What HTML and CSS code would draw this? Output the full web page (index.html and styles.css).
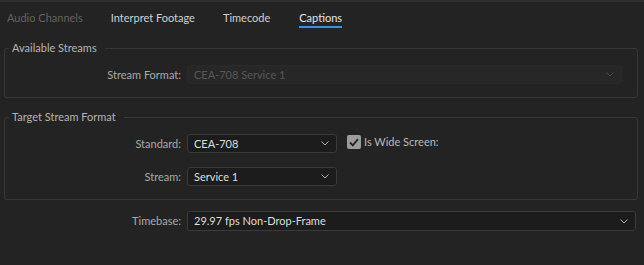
FILE: index.html
```html
<!DOCTYPE html>
<html lang="en">
<head>
    <meta charset="UTF-8">
    <title>Captions</title>
    <link rel="stylesheet" href="styles.css">
</head>
<body>

<div class="tabs">
    <span class="tab disabled">Audio Channels</span>
    <span class="tab">Interpret Footage</span>
    <span class="tab">Timecode</span>
    <span class="tab active">Captions</span>
</div>

<fieldset class="group first">
    <legend>Available Streams</legend>
    <div class="row">
        <label class="field-label">Stream Format:</label>
        <div class="dropdown wide-1 off">
            <span>CEA-708 Service 1</span>
            <svg class="chev" width="8" height="5" viewBox="0 0 8 5"><path d="M0.5 0.5 L4 4 L7.5 0.5" fill="none" stroke="currentColor" stroke-width="1"/></svg>
        </div>
    </div>
</fieldset>

<fieldset class="group second">
    <legend>Target Stream Format</legend>
    <div class="row">
        <label class="field-label">Standard:</label>
        <div class="dropdown short">
            <span>CEA-708</span>
            <svg class="chev" width="8" height="5" viewBox="0 0 8 5"><path d="M0.5 0.5 L4 4 L7.5 0.5" fill="none" stroke="currentColor" stroke-width="1"/></svg>
        </div>
        <div class="check">
            <span class="box">
                <svg width="10" height="9" viewBox="0 0 10 9"><path d="M1 4.5 L3.8 7.3 L9 1.2" fill="none" stroke="#262626" stroke-width="1.8"/></svg>
            </span>
            <span>Is Wide Screen:</span>
        </div>
    </div>
    <div class="row">
        <label class="field-label">Stream:</label>
        <div class="dropdown short">
            <span>Service 1</span>
            <svg class="chev" width="8" height="5" viewBox="0 0 8 5"><path d="M0.5 0.5 L4 4 L7.5 0.5" fill="none" stroke="currentColor" stroke-width="1"/></svg>
        </div>
    </div>
</fieldset>

<div class="row timebase">
    <label class="field-label">Timebase:</label>
    <div class="dropdown wide-2">
        <span>29.97 fps Non-Drop-Frame</span>
        <svg class="chev" width="8" height="5" viewBox="0 0 8 5"><path d="M0.5 0.5 L4 4 L7.5 0.5" fill="none" stroke="currentColor" stroke-width="1"/></svg>
    </div>
</div>

</body>
</html>
```

FILE: styles.css
```css
/* Page */
body {
    margin: 0;
    background-color: #232323;
    font-family: 'Lato', 'Liberation Sans', sans-serif;
    font-size: 11px;
    line-height: 16px;
    color: #d4d4d4;
    border-top: 2px solid #2e2e2e;
}

/* Tab strip */
.tabs {
    display: flex;
    gap: 28px;
    padding: 8px 0 0 7px;
    height: 18px;
}

.tab {
    color: #d0d0d0;
    height: 16px;
}

.tab.disabled {
    color: #626262;
}

.tab.active {
    margin-left: 1px;
    color: #e6e6e6;
    border-bottom: 2px solid #3a8fe0;
}

/* Groups */
.group {
    margin: 13px 6px 0 4px;
    padding: 0 0 13px 0;
    border: 1px solid #383838;
    border-radius: 3px;
}

.group.second {
    margin-top: 12px;
}

legend {
    margin-left: 4px;
    padding: 0 8px 0 3px;
    line-height: 14px;
    color: #b4b4b4;
}

/* Label + control rows */
.row {
    display: flex;
    align-items: center;
    gap: 6px;
    margin-top: 10px;
}

.group .row + .row {
    margin-top: 14px;
}

.field-label {
    width: 176px;
    text-align: right;
    color: #a9a9a9;
}

.timebase {
    margin-top: 11px;
}

.timebase .field-label {
    width: 181px;
}

/* Dropdowns */
.dropdown {
    display: flex;
    align-items: center;
    justify-content: space-between;
    box-sizing: border-box;
    height: 19px;
    padding: 0 7px 0 6px;
    background-color: #1c1c1c;
    border: 1px solid #3a3a3a;
    border-radius: 3px;
    color: #dedede;
}

.dropdown .chev {
    color: #b0b0b0;
}

.dropdown.off {
    background-color: #272727;
    border-color: #2a2a2a;
    color: #575757;
}

.dropdown.off .chev {
    color: #4a4a4a;
}

.wide-1 {
    width: 435px;
}

.wide-2 {
    width: 449px;
    height: 20px;
}

.short {
    width: 150px;
}

/* Checkbox */
.check {
    display: flex;
    align-items: center;
    gap: 3px;
    margin-left: 4px;
    margin-top: -3px;
    color: #b8b8b8;
}

.box {
    display: flex;
    align-items: center;
    justify-content: center;
    width: 14px;
    height: 14px;
    background-color: #9c9c9c;
    border-radius: 2px;
}
```
